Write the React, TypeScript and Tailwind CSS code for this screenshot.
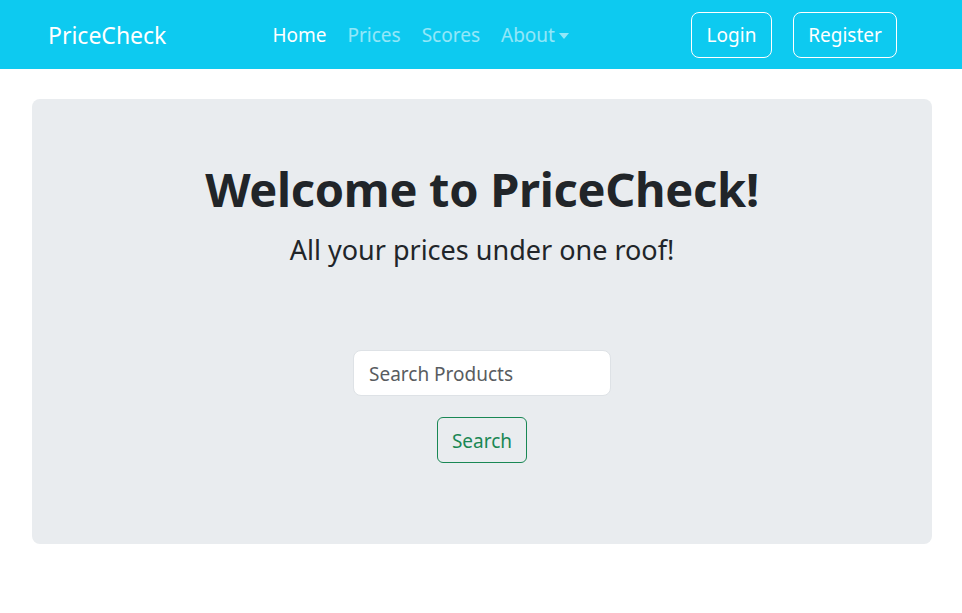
import React from 'react';

const font = { fontFamily: '"Noto Sans", "Open Sans", sans-serif' };

const Navbar = () => {
  return (
    <nav className="flex items-center h-[69px] bg-[#0dcaf0] pl-[48px] pr-[65px] pt-[2px]">
      <a className="text-[23px] text-white leading-none">PriceCheck</a>
      <ul className="flex items-center gap-[21px] ml-[106px] text-[19px]">
        <li className="text-white">Home</li>
        <li className="text-white/55">Prices</li>
        <li className="text-white/55">Scores</li>
        <li className="flex items-center text-white/55">
          About
          <span className="ml-[4px] border-x-[5px] border-t-[6px] border-x-transparent border-t-white/55 w-0 h-0" />
        </li>
      </ul>
      <div className="flex items-center gap-[21px] ml-auto -mt-[2px]">
        <button className="h-[46px] w-[81px] rounded-lg border border-white text-white text-[19px] pt-[2px]">
          Login
        </button>
        <button className="h-[46px] w-[104px] rounded-lg border border-white text-white text-[19px] pt-[2px]">
          Register
        </button>
      </div>
    </nav>
  );
};

const App = () => {
  return (
    <div className="min-h-[613px] bg-white" style={font}>
      <Navbar />
      <main className="pl-[32px] pr-[30px] pt-[30px]">
        <section className="flex flex-col items-center bg-[#e9ecef] rounded-lg h-[445px] pt-[62px]">
          <h1 className="text-[47px] font-bold tracking-[-0.3px] text-[#212529] leading-[1.2]">
            Welcome to PriceCheck!
          </h1>
          <p className="text-[27px] text-[#212529] leading-[1.5] mt-[13px]">All your prices under one roof!</p>
          <input
            type="text"
            placeholder="Search Products"
            className="mt-[79px] w-[258px] h-[46px] rounded-lg border border-[#dee2e6] bg-white px-[15px] pt-[3px] text-[19px] text-[#212529] placeholder:text-[#595c5f] outline-none"
          />
          <button className="mt-[21px] w-[90px] h-[46px] rounded-md border border-[#198754] text-[#198754] text-[19px] pt-[3px]">
            Search
          </button>
        </section>
      </main>
    </div>
  );
};

export default App;
